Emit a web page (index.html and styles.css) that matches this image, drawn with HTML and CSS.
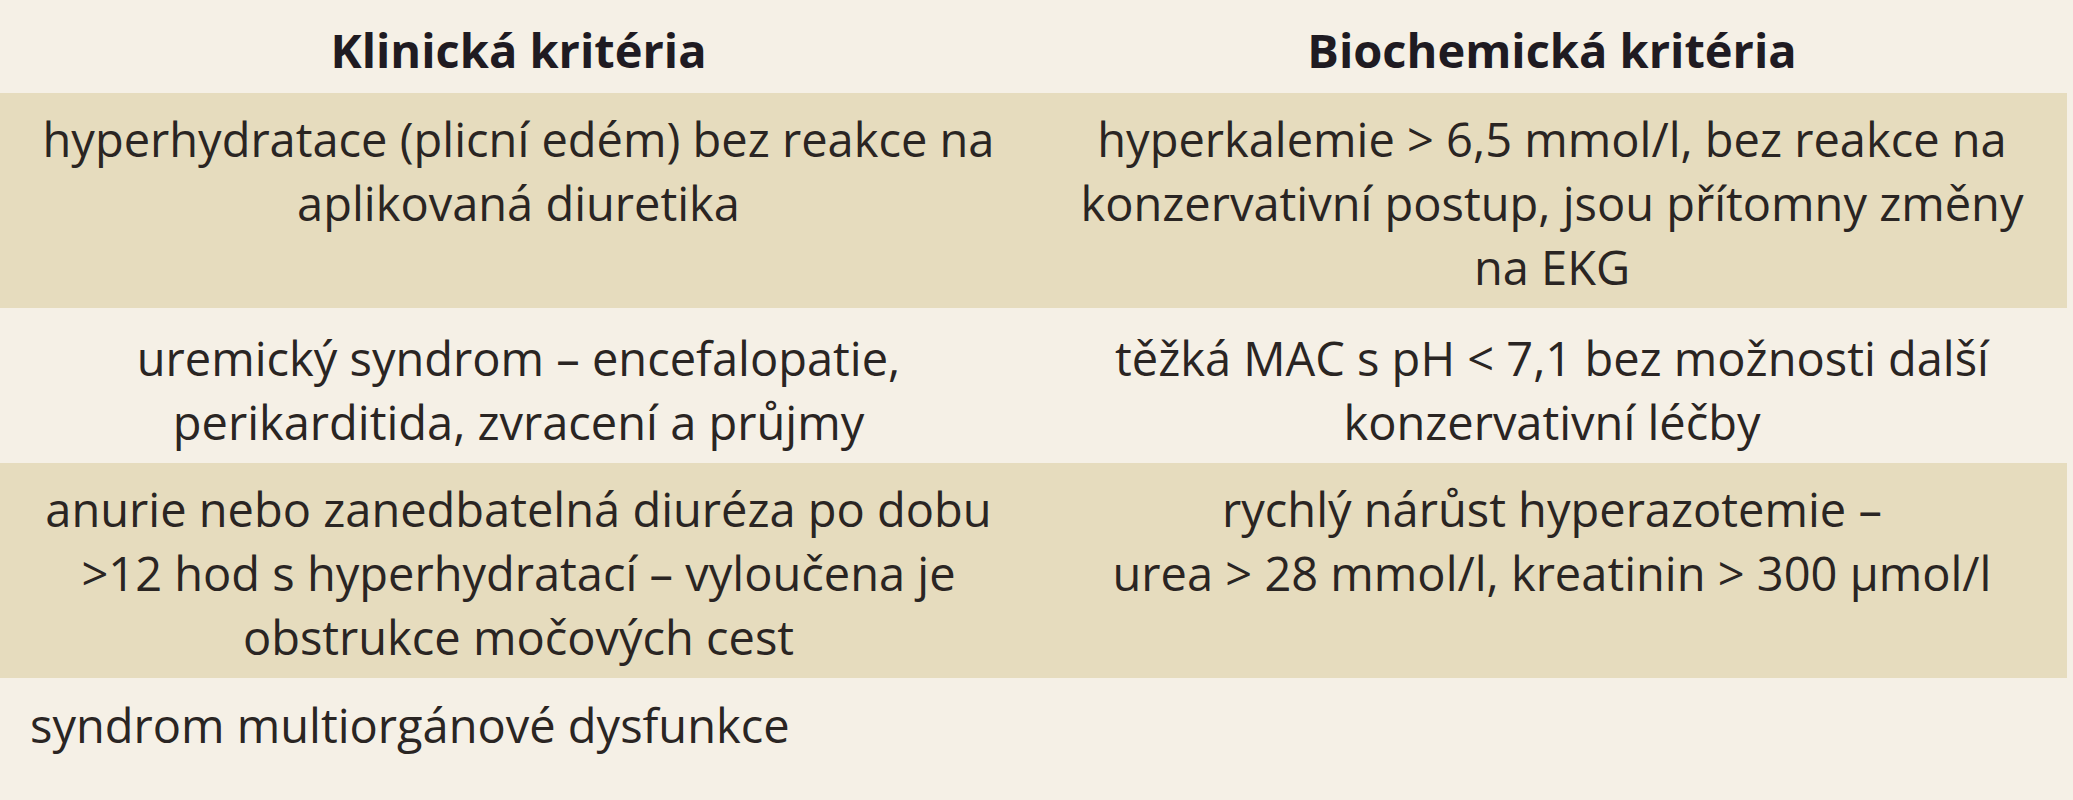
FILE: index.html
```html
<!DOCTYPE html>
<html lang="cs">
<head>
<meta charset="utf-8">
<title>Kritéria</title>
<link rel="stylesheet" href="styles.css">
</head>
<body>
<table class="criteria">
  <colgroup>
    <col class="col-left">
    <col class="col-right">
  </colgroup>
  <thead>
    <tr class="head-row">
      <th>Klinická kritéria</th>
      <th>Biochemická kritéria</th>
    </tr>
  </thead>
  <tbody>
    <tr class="row row-tan">
      <td>hyperhydratace (plicní edém) bez reakce na<br>aplikovaná diuretika</td>
      <td>hyperkalemie &gt; 6,5 mmol/l, bez reakce na<br>konzervativní postup, jsou přítomny změny<br>na EKG</td>
    </tr>
    <tr class="row row-light row-second">
      <td>uremický syndrom – encefalopatie,<br>perikarditida, zvracení a průjmy</td>
      <td>těžká MAC s pH &lt; 7,1 bez možnosti další<br>konzervativní léčby</td>
    </tr>
    <tr class="row row-tan">
      <td>anurie nebo zanedbatelná diuréza po dobu<br>&gt;12 hod s hyperhydratací – vyloučena je<br>obstrukce močových cest</td>
      <td>rychlý nárůst hyperazotemie –<br>urea &gt; 28 mmol/l, kreatinin &gt; 300 µmol/l</td>
    </tr>
    <tr class="row row-light row-last">
      <td class="cell-left">syndrom multiorgánové dysfunkce</td>
      <td></td>
    </tr>
  </tbody>
</table>
</body>
</html>
```
FILE: styles.css
```css
html, body {
  margin: 0;
  padding: 0;
  background: #f5f0e6;
}

body {
  width: 2073px;
  height: 800px;
  overflow: hidden;
  font-family: "Open Sans", "Noto Sans", sans-serif;
  font-size: 47px;
  line-height: 64px;
  color: #2a2523;
}

.criteria {
  width: 2067px;
  border-collapse: collapse;
  border-spacing: 0;
  table-layout: fixed;
}

.col-left {
  width: 1037px;
}

.col-right {
  width: 1030px;
}

.criteria th,
.criteria td {
  padding: 0;
  text-align: center;
  vertical-align: top;
  white-space: nowrap;
}

.head-row th {
  height: 93px;
  box-sizing: border-box;
  padding-top: 18px;
  font-weight: 700;
  color: #1f1b22;
  background: #f5f0e6;
}

.row td {
  padding-top: 14px;
  padding-bottom: 9px;
}

.row-tan td {
  background: #e6dcbe;
}

.row-light td {
  background: #f5f0e6;
}

.row-second td {
  padding-top: 18px;
  padding-bottom: 9px;
}

.row-last td {
  padding-top: 15px;
}

.row-last .cell-left {
  text-align: left;
  padding-left: 30px;
}
```
